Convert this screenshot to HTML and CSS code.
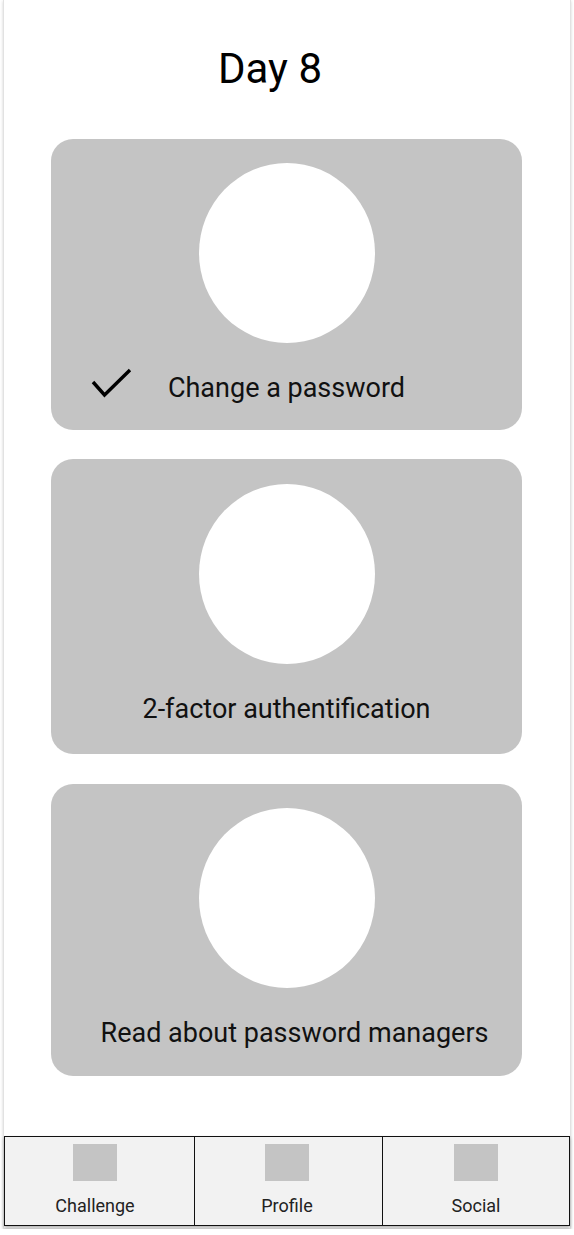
FILE: index.html
```html
<!DOCTYPE html>
<html lang="en">
<head>
<meta charset="utf-8">
<title>Day 8</title>
<link rel="stylesheet" href="styles.css">
</head>
<body>
<div class="phone">
  <main class="content">
    <h1 class="title">Day 8</h1>
    <section class="cards">
      <div class="card">
        <div class="circle"></div>
        <p class="label">Change a password</p>
        <svg class="check" width="42" height="32" viewBox="0 0 42 32" aria-hidden="true">
          <path d="M2 14 L13.5 27 L39 2" fill="none" stroke="#000" stroke-width="3.4" stroke-linecap="butt" stroke-linejoin="miter"/>
        </svg>
      </div>
      <div class="card card-tall">
        <div class="circle"></div>
        <p class="label">2-factor authentification</p>
      </div>
      <div class="card card-shift">
        <div class="circle"></div>
        <p class="label">Read about password managers</p>
      </div>
    </section>
  </main>
  <nav class="tabbar">
    <div class="tab tab-first"><span class="tab-icon"></span><span class="tab-label">Challenge</span></div>
    <div class="tab tab-mid"><span class="tab-icon"></span><span class="tab-label">Profile</span></div>
    <div class="tab"><span class="tab-icon"></span><span class="tab-label">Social</span></div>
  </nav>
</div>
</body>
</html>
```

FILE: styles.css
```css
* { box-sizing: border-box; }

html, body {
  margin: 0;
  padding: 0;
  background: #ffffff;
}

body {
  font-family: Roboto, "Liberation Sans", Arial, sans-serif;
  color: #000;
}

.phone {
  margin: 0 3px;
  width: 568px;
  height: 1229px;
  border: 1px solid #e2e2e2;
  border-top: none;
  box-shadow: 0 1px 3px rgba(0, 0, 0, 0.18);
  background: #fff;
  display: flex;
  flex-direction: column;
}

.content {
  flex: 1;
  display: flex;
  flex-direction: column;
}

.title {
  margin: 0;
  padding: 44px 34px 0 0;
  text-align: center;
  font-size: 42px;
  line-height: 50px;
  font-weight: 400;
}

.cards {
  display: flex;
  flex-direction: column;
  gap: 29px;
  margin: 45px 0 0 47px;
  width: 471px;
}

.card {
  position: relative;
  background: #c4c4c4;
  border-radius: 22px;
  padding: 24px 0 26px;
  display: flex;
  flex-direction: column;
  align-items: center;
}

.card-tall {
  padding-top: 25px;
  padding-bottom: 29px;
}

.card-shift {
  margin-top: 1px;
  padding-bottom: 27px;
}

.circle {
  width: 176px;
  height: 180px;
  border-radius: 50%;
  background: #fff;
}

.label {
  margin: 29px 0 0;
  font-size: 27px;
  line-height: 32px;
  color: #111;
}

.card-shift .label {
  padding-left: 16px;
}

.check {
  position: absolute;
  left: 40px;
  top: 229px;
}

.tabbar {
  margin: 0 0 2px;
  height: 90px;
  border: 1.5px solid #111;
  background: #f2f2f2;
  display: grid;
  grid-template-columns: 189px 188px 1fr;
  box-shadow: 0 2px 3px rgba(0, 0, 0, 0.3);
}

.tab {
  display: flex;
  flex-direction: column;
  align-items: center;
  padding-top: 7px;
}

.tab-first {
  padding-right: 9px;
}

.tab-mid {
  padding-right: 3px;
}

.tab + .tab {
  border-left: 1.5px solid #111;
}

.tab-icon {
  width: 44px;
  height: 37px;
  background: #c4c4c4;
}

.tab-label {
  margin-top: 14px;
  font-size: 18px;
  line-height: 22px;
  color: #222;
}
```
